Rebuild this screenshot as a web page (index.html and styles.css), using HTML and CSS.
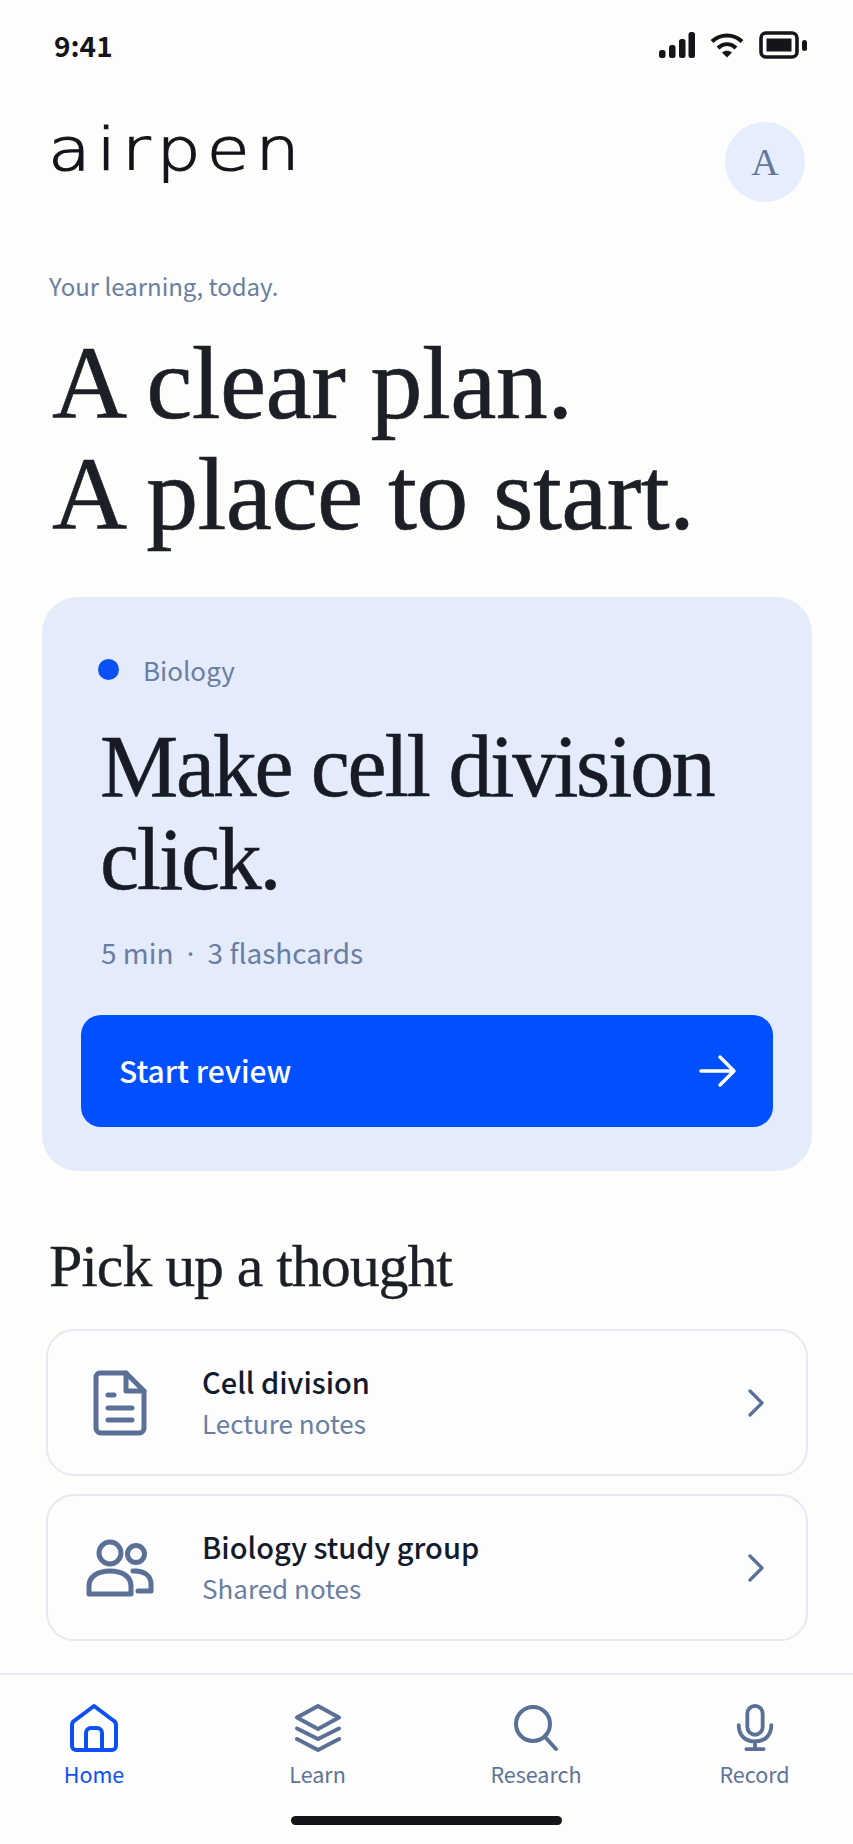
FILE: index.html
```html
<!DOCTYPE html>
<html lang="en">
<head>
    <meta charset="UTF-8">
    <meta name="viewport" content="width=device-width, initial-scale=1.0">
    <title>airpen</title>
    <link rel="stylesheet" href="styles.css">
</head>
<body>
<div class="screen">

    <!-- STATUS BAR -->
    <div class="status-bar">
        <span class="time">9:41</span>
        <div class="status-icons">
            <svg width="36" height="26" viewBox="0 0 36 26" fill="#14151a">
                <rect x="0" y="18" width="6.5" height="8" rx="2.5"/>
                <rect x="10" y="13" width="6.5" height="13" rx="2.5"/>
                <rect x="20" y="7" width="6.5" height="19" rx="2.5"/>
                <rect x="29.5" y="0" width="6.5" height="26" rx="2.5"/>
            </svg>
            <svg width="34" height="26" viewBox="0 0 34 26" fill="none" stroke="#14151a" stroke-width="4.2">
                <path d="M2 9.5C10.500 1.500 23.500 1.500 32 9.500"/>
                <path d="M8 16C13.500 11 20.500 11 26 16"/>
                <path d="M12 20.500L17 25.500L22 20.500C19 18.300 15 18.300 12 20.500Z" fill="#14151a" stroke="none"/>
            </svg>
            <svg width="48" height="28" viewBox="0 0 48 28" fill="none">
                <rect x="2" y="2" width="36" height="24" rx="5" stroke="#14151a" stroke-width="3.600"/>
                <rect x="7.500" y="7.500" width="25" height="13" fill="#14151a"/>
                <rect x="43" y="9" width="5" height="11" rx="2.500" fill="#14151a"/>
            </svg>
        </div>
    </div>

    <!-- HEADER -->
    <div class="top-row">
        <span class="logo">airpen</span>
        <div class="avatar">A</div>
    </div>

    <p class="eyebrow">Your learning, today.</p>
    <h1>A clear plan.<br>A place to start.</h1>

    <!-- TODAY CARD -->
    <div class="plan-card">
        <div class="subject"><span class="dot"></span>Biology</div>
        <h2>Make cell division click.</h2>
        <p class="meta">5 min <span class="sep">·</span> 3 flashcards</p>
        <div class="start-btn">
            <span class="start-label">Start review</span>
            <svg width="38" height="34" viewBox="0 0 38 34" fill="none" stroke="#fff" stroke-width="3.400" stroke-linecap="round" stroke-linejoin="round">
                <path d="M2 17H35M21 3L35 17L21 31"/>
            </svg>
        </div>
    </div>

    <h3>Pick up a thought</h3>

    <div class="thought">
        <div class="thought-icon">
            <svg width="54" height="66" viewBox="0 0 54 66" fill="none" stroke="#5b7096" stroke-width="5" stroke-linecap="round" stroke-linejoin="round">
                <path d="M7 3H33L51 21V58A5 5 0 0 1 46 63H8A5 5 0 0 1 3 58V7A4 4 0 0 1 7 3Z"/>
                <path d="M33 3V21H51"/>
                <path d="M15 25H21M15 38H39M15 50H39"/>
            </svg>
        </div>
        <div class="thought-text">
            <div class="thought-title">Cell division</div>
            <div class="thought-sub">Lecture notes</div>
        </div>
        <svg class="chevron" width="18" height="28" viewBox="0 0 18 28" fill="none" stroke="#5b7096" stroke-width="3.200" stroke-linecap="round" stroke-linejoin="round">
            <path d="M3 2L15 14L3 26"/>
        </svg>
    </div>

    <div class="thought">
        <div class="thought-icon">
            <svg width="68" height="58" viewBox="0 0 68 58" fill="none" stroke="#5b7096" stroke-width="5" stroke-linecap="round" stroke-linejoin="round">
                <circle cx="24" cy="14" r="11"/>
                <circle cx="50" cy="15" r="8.500"/>
                <path d="M3 55V47C3 38 11 32 24 32C37 32 45 38 45 47V55Z"/>
                <path d="M47 32C58 31 65 37 65 45V52H52"/>
            </svg>
        </div>
        <div class="thought-text">
            <div class="thought-title">Biology study group</div>
            <div class="thought-sub">Shared notes</div>
        </div>
        <svg class="chevron" width="18" height="28" viewBox="0 0 18 28" fill="none" stroke="#5b7096" stroke-width="3.200" stroke-linecap="round" stroke-linejoin="round">
            <path d="M3 2L15 14L3 26"/>
        </svg>
    </div>

    <!-- BOTTOM NAV -->
    <div class="tab-bar">
        <div class="tab active">
            <svg width="48" height="48" viewBox="0 0 48 48" fill="none" stroke="#0b50f5" stroke-width="4" stroke-linecap="round" stroke-linejoin="round">
                <path d="M24 2L44 17C45.500 18 46 19.500 46 21V42A4 4 0 0 1 42 46H6A4 4 0 0 1 2 42V21C2 19.500 2.500 18 4 17Z"/>
                <path d="M16 46V29A5 5 0 0 1 21 24H27A5 5 0 0 1 32 29V46"/>
            </svg>
            <span>Home</span>
        </div>
        <div class="tab tab-learn">
            <svg width="48" height="48" viewBox="0 0 48 48" fill="none" stroke="#5b7096" stroke-width="4" stroke-linecap="round" stroke-linejoin="round">
                <path d="M24 2L45 13.500L24 25L3 13.500Z"/>
                <path d="M3 24.500L24 35L45 24.500"/>
                <path d="M3 35L24 46L45 35"/>
            </svg>
            <span>Learn</span>
        </div>
        <div class="tab">
            <svg width="46" height="48" viewBox="0 0 46 48" fill="none" stroke="#5b7096" stroke-width="4" stroke-linecap="round" stroke-linejoin="round">
                <circle cx="20" cy="20" r="17"/>
                <path d="M32 33L43 45"/>
            </svg>
            <span>Research</span>
        </div>
        <div class="tab">
            <svg width="38" height="50" viewBox="0 0 38 50" fill="none" stroke="#5b7096" stroke-width="4" stroke-linecap="round" stroke-linejoin="round">
                <rect x="11" y="2" width="16" height="30" rx="8"/>
                <path d="M2 22C2 33 9 39 19 39C29 39 36 33 36 22"/>
                <path d="M19 39V47M10 47H28"/>
            </svg>
            <span>Record</span>
        </div>
    </div>

    <div class="home-bar"></div>
</div>
</body>
</html>
```

FILE: styles.css
```css
* {
    box-sizing: border-box;
}
body {
    margin: 0;
    background: #fdfdfb;
    font-family: 'Noto Sans CJK SC', 'Noto Sans', sans-serif;
}
.screen {
    width: 853px;
    height: 1844px;
    overflow: hidden;
}
.status-bar {
    display: flex;
    justify-content: space-between;
    align-items: center;
    height: 30px;
    margin-top: 30px;
    padding: 0 46px 0 54px;
}
.time {
    font-size: 28px;
    font-weight: 700;
    color: #14151a;
}
.status-icons {
    display: flex;
    align-items: center;
    gap: 15px;
}
.top-row {
    display: flex;
    justify-content: space-between;
    align-items: center;
    height: 80px;
    margin-top: 62px;
    padding: 0 48px 0 48px;
}
.logo {
    font-family: 'DejaVu Sans', sans-serif;
    font-weight: 200;
    font-size: 58px;
    line-height: 80px;
    letter-spacing: 5px;
    -webkit-text-stroke: 1.200px #14151a;
    color: #14151a;
    margin-top: -24px;
    transform: scaleX(1.2);
    transform-origin: left center;
}
.avatar {
    width: 80px;
    height: 80px;
    border-radius: 50%;
    background: #e6edfc;
    color: #64779b;
    font-family: 'Liberation Serif', serif;
    font-size: 38px;
    display: flex;
    justify-content: center;
    align-items: center;
}
.eyebrow {
    margin: 68px 0 0 49px;
    font-size: 24px;
    line-height: 32px;
    color: #6a7da2;
}
h1 {
    margin: 25px 0 0 52px;
    font-family: 'Liberation Serif', serif;
    font-weight: 400;
    font-size: 104px;
    line-height: 111px;
    letter-spacing: -0.600px;
    -webkit-text-stroke: 0.6px #1d1f27;
    color: #1d1f27;
}
.plan-card {
    margin: 48px 41px 0 42px;
    height: 574px;
    padding: 59px 39px 0;
    background: #e4ecfc;
    border-radius: 36px;
}
.subject {
    display: flex;
    align-items: center;
    gap: 24px;
    margin-left: 17px;
    height: 26px;
    font-size: 26px;
    color: #6a7da2;
}
.dot {
    width: 21px;
    height: 21px;
    border-radius: 50%;
    background: #0b50f5;
}
h2 {
    margin: 38px 0 0 19px;
    font-family: 'Liberation Serif', serif;
    font-weight: 400;
    font-size: 88px;
    line-height: 93px;
    letter-spacing: -2.300px;
    -webkit-text-stroke: 0.5px #181b25;
    color: #181b25;
}
.meta {
    margin: 27px 0 0 20px;
    font-size: 28px;
    line-height: 38px;
    color: #6a7da2;
}
.sep {
    font-family: 'Noto Sans', sans-serif;
    margin: 0 7px;
}
.start-btn {
    display: flex;
    justify-content: space-between;
    align-items: center;
    height: 112px;
    margin-top: 43px;
    padding: 0 36px 0 38px;
    background: #0050ff;
    border-radius: 20px;
    color: white;
    font-size: 30px;
    font-weight: 500;
}
.start-label {
    margin-bottom: 2px;
}
h3 {
    margin: 61px 0 29px 49px;
    font-family: 'Liberation Serif', serif;
    font-weight: 400;
    font-size: 60px;
    line-height: 68px;
    letter-spacing: -1.100px;
    -webkit-text-stroke: 0.3px #1d1f27;
    color: #1d1f27;
}
.thought {
    display: flex;
    align-items: center;
    height: 147px;
    margin: 0 45px 18px 46px;
    padding: 0 41px 0 0;
    background: #fdfdfd;
    border: 2px solid #e6e9f2;
    border-radius: 28px;
}
.thought-icon {
    width: 143px;
    margin-right: 11px;
    display: flex;
    justify-content: center;
    flex-shrink: 0;
}
.thought-text {
    flex: 1;
    padding-bottom: 2px;
}
.thought-title {
    font-size: 29px;
    font-weight: 500;
    line-height: 42px;
    color: #131a2e;
}
.thought-sub {
    font-size: 26px;
    line-height: 42px;
    color: #6a7da2;
}
.tab-bar {
    display: flex;
    gap: 98.500px;
    margin-top: 32px;
    padding: 29px 0 0 34px;
    height: 133px;
    border-top: 2px solid #e9ebf2;
}
.tab {
    width: 120px;
    display: flex;
    flex-direction: column;
    align-items: center;
    gap: 7px;
    font-size: 21.500px;
    line-height: 30px;
    color: #5f7399;
}
.tab svg {
    height: 48px;
}
.tab.active {
    color: #0b50f5;
}
.tab-learn {
    margin-left: 5px;
}
.home-bar {
    width: 271px;
    height: 9px;
    margin: 10px auto 0;
    border-radius: 5px;
    background: #14151a;
}
```
